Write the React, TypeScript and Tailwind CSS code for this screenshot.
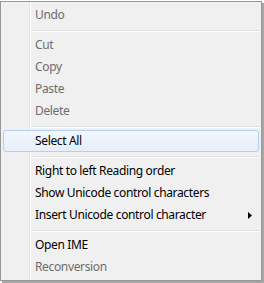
import React from "react";

type Item =
  | { kind: "sep" }
  | { kind: "item"; label: string; disabled?: boolean; active?: boolean; submenu?: boolean };

const items: Item[] = [
  { kind: "item", label: "Undo", disabled: true },
  { kind: "sep" },
  { kind: "item", label: "Cut", disabled: true },
  { kind: "item", label: "Copy", disabled: true },
  { kind: "item", label: "Paste", disabled: true },
  { kind: "item", label: "Delete", disabled: true },
  { kind: "sep" },
  { kind: "item", label: "Select All", active: true },
  { kind: "sep" },
  { kind: "item", label: "Right to left Reading order" },
  { kind: "item", label: "Show Unicode control characters" },
  { kind: "item", label: "Insert Unicode control character", submenu: true },
  { kind: "sep" },
  { kind: "item", label: "Open IME" },
  { kind: "item", label: "Reconversion", disabled: true },
];

function MenuRow({ item }: { item: Extract<Item, { kind: "item" }> }) {
  return (
    <div
      className={
        "relative z-10 flex h-[22px] items-center justify-between rounded-[3px] border pl-[31px] pr-[5px] " +
        (item.active
          ? "border-[#b2cff3] bg-gradient-to-b from-[#f3f7fd] to-[#e6eef9]"
          : "border-transparent")
      }
    >
      <span className={item.disabled ? "text-[#6d6d6d]" : "text-black"}>{item.label}</span>
      {item.submenu && (
        <svg width="4" height="7" viewBox="0 0 4 7" className="mr-[1px]">
          <path d="M0 0 L4 3.5 L0 7 Z" fill="#000" />
        </svg>
      )}
    </div>
  );
}

export default function App() {
  return (
    <div className="h-[283px] w-[264px] bg-white pt-[1px]">
      <div
        className="relative h-[280px] w-[262px] border border-[#979797] bg-[#f0f0f0] p-[2px] text-[12px] leading-none tracking-[-0.35px] shadow-[2px_2px_1px_rgba(0,0,0,0.35)]"
        style={{ fontFamily: '"Noto Sans", "Open Sans", sans-serif' }}
      >
        {/* gutter line */}
        <div className="absolute bottom-0 left-[28px] top-0 w-[1px] bg-[#e2e3e3]" />
        <div className="absolute bottom-0 left-[29px] top-0 w-[1px] bg-white" />

        <div className="flex flex-col">
          {items.map((item, i) =>
            item.kind === "sep" ? (
              <div key={i} className="h-[8px] pl-[28px] pt-[4px]">
                <div className="h-[1px] bg-[#e0e0e0]" />
                <div className="h-[1px] bg-white" />
              </div>
            ) : (
              <MenuRow key={i} item={item} />
            )
          )}
        </div>
      </div>
    </div>
  );
}
